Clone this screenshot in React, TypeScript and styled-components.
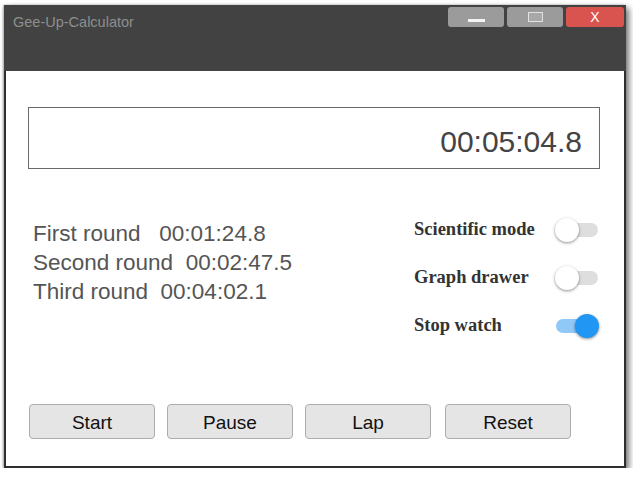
import React, { useState } from "react";
import styled, { createGlobalStyle, css } from "styled-components";

const GlobalStyle = createGlobalStyle`
  html, body {
    margin: 0;
    padding: 0;
    background: #ffffff;
  }
  body {
    font-family: "Liberation Sans", Arial, sans-serif;
  }
`;

interface Lap {
  name: string;
  time: string;
}

const laps: Lap[] = [
  { name: "First round", time: "  00:01:24.8" },
  { name: "Second round", time: " 00:02:47.5" },
  { name: "Third round", time: " 00:04:02.1" },
];

const App = () => {
  const [modes, setModes] = useState({
    scientific: false,
    graph: false,
    stopwatch: true,
  });

  const flip = (key: keyof typeof modes) => {
    setModes((m) => ({ ...m, [key]: !m[key] }));
  };

  return (
    <>
      <GlobalStyle />
      <Window>
        <TitleBar>
          <Title>Gee-Up-Calculator</Title>
          <WinButtons>
            <WinButton>
              <MinIcon />
            </WinButton>
            <WinButton>
              <MaxIcon />
            </WinButton>
            <WinButton close>X</WinButton>
          </WinButtons>
        </TitleBar>
        <Content>
          <Display>00:05:04.8</Display>
          <Middle>
            <LapList>
              {laps.map((lap) => (
                <LapRow key={lap.name}>
                  {lap.name} {lap.time}
                </LapRow>
              ))}
            </LapList>
            <Options>
              <OptionRow>
                <OptionLabel>Scientific mode</OptionLabel>
                <Switch on={modes.scientific} onClick={() => flip("scientific")}>
                  <Knob on={modes.scientific} />
                </Switch>
              </OptionRow>
              <OptionRow>
                <OptionLabel>Graph drawer</OptionLabel>
                <Switch on={modes.graph} onClick={() => flip("graph")}>
                  <Knob on={modes.graph} />
                </Switch>
              </OptionRow>
              <OptionRow>
                <OptionLabel>Stop watch</OptionLabel>
                <Switch on={modes.stopwatch} onClick={() => flip("stopwatch")}>
                  <Knob on={modes.stopwatch} />
                </Switch>
              </OptionRow>
            </Options>
          </Middle>
          <ButtonRow>
            <ActionButton>Start</ActionButton>
            <ActionButton>Pause</ActionButton>
            <ActionButton>Lap</ActionButton>
            <ActionButton wide>Reset</ActionButton>
          </ButtonRow>
        </Content>
      </Window>
    </>
  );
};

const Window = styled.div`
  margin: 5px 0 0 4px;
  width: 622px;
  display: flex;
  flex-direction: column;
  box-shadow: 3px 3px 6px rgba(0, 0, 0, 0.55), -1px 0 2px rgba(0, 0, 0, 0.3);
`;

const TitleBar = styled.div`
  height: 66px;
  background: #424242;
  display: flex;
  align-items: flex-start;
  justify-content: space-between;
  padding: 2px 2px 0 9px;
  box-sizing: border-box;
`;

const Title = styled.div`
  margin-top: 7px;
  font-family: "Liberation Sans", Arial, sans-serif;
  font-size: 14.5px;
  color: #8e8e8e;
`;

const WinButtons = styled.div`
  display: flex;
  gap: 3px;
`;

const WinButton = styled.div<{ close?: boolean }>`
  width: 56px;
  height: 20px;
  border-radius: 3px;
  background: #9b9b9b;
  display: flex;
  align-items: center;
  justify-content: center;
  color: #ffffff;
  font-family: "Liberation Sans", Arial, sans-serif;
  font-size: 14px;
  ${(props) =>
    props.close &&
    css`
      width: 58px;
      background: #d9534f;
    `}
`;

const MinIcon = styled.div`
  width: 17px;
  height: 3px;
  margin-top: 6px;
  background: #f4f4f4;
`;

const MaxIcon = styled.div`
  width: 13px;
  height: 8px;
  border: 1px solid #e2e2e2;
  background: #a8a8a8;
`;

const Content = styled.div`
  height: 397px;
  box-sizing: border-box;
  background: #ffffff;
  border: 2px solid #2e2e2e;
  border-top: none;
  padding: 36px 24px 0 22px;
  display: flex;
  flex-direction: column;
`;

const Display = styled.div`
  height: 62px;
  box-sizing: border-box;
  border: 1px solid #6a6a6a;
  display: flex;
  align-items: center;
  justify-content: flex-end;
  padding: 7px 17px 0 0;
  font-family: "Liberation Sans", Arial, sans-serif;
  font-size: 30px;
  color: #444444;
`;

const Middle = styled.div`
  margin-top: 37px;
  display: flex;
  justify-content: space-between;
`;

const LapList = styled.div`
  margin: 13px 0 0 5px;
  display: flex;
  flex-direction: column;
`;

const LapRow = styled.div`
  font-family: "Liberation Sans", Arial, sans-serif;
  font-size: 22.5px;
  line-height: 29px;
  color: #555555;
  white-space: pre;
`;

const Options = styled.div`
  margin-right: 2px;
  display: flex;
  flex-direction: column;
`;

const OptionRow = styled.div`
  height: 48px;
  display: flex;
  align-items: center;
  justify-content: space-between;
  width: 184px;
`;

const OptionLabel = styled.div`
  font-family: "Liberation Serif", "Times New Roman", serif;
  font-weight: bold;
  font-size: 18.5px;
  color: #333333;
  margin-top: -1px;
`;

const Switch = styled.div<{ on: boolean }>`
  position: relative;
  width: 42px;
  height: 14px;
  border-radius: 7px;
  background: ${(props) => (props.on ? "#90c8f8" : "#dedede")};
  cursor: pointer;
`;

const Knob = styled.div<{ on: boolean }>`
  position: absolute;
  top: -5px;
  left: ${(props) => (props.on ? "19px" : "-1px")};
  width: 24px;
  height: 24px;
  border-radius: 50%;
  box-sizing: border-box;
  background: ${(props) => (props.on ? "#2196f3" : "#ffffff")};
  box-shadow: 0 1px 3px rgba(0, 0, 0, 0.45);
`;

const ButtonRow = styled.div`
  margin-top: 54px;
  padding-left: 1px;
  display: flex;
  gap: 12px;
`;

const ActionButton = styled.button<{ wide?: boolean }>`
  width: 126px;
  height: 35px;
  border: 1px solid #acacac;
  border-radius: 4px;
  background: #e5e5e5;
  font-family: "Liberation Sans", Arial, sans-serif;
  font-size: 19px;
  color: #111111;
  padding: 2px 0 0;
  ${(props) =>
    props.wide &&
    css`
      margin-left: 2px;
    `}
`;

export default App;
